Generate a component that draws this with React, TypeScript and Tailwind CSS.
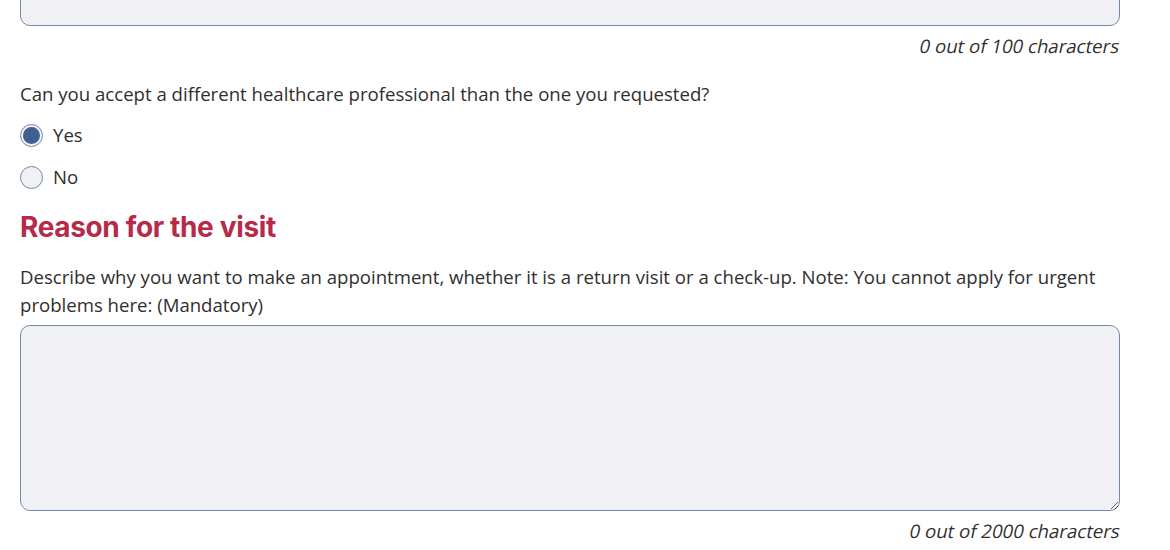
import React, { useState } from 'react'

const Radio: React.FC<{ label: string; checked: boolean; onSelect: () => void }> = ({ label, checked, onSelect }) => (
  <label className="flex items-center gap-[10px] h-6 cursor-pointer" onClick={onSelect}>
    <span className="w-[23px] h-[23px] rounded-full border-[1.5px] border-[#6f87ae] bg-[#f0f0f5] flex items-center justify-center">
      {checked && <span className="w-[17px] h-[17px] rounded-full bg-[#3f5e91]" />}
    </span>
    <span>{label}</span>
  </label>
)

export default function App() {
  const [accept, setAccept] = useState('yes')
  const [reason, setReason] = useState('')

  return (
    <div className="min-h-screen bg-white text-[#2f2f2f] text-[18.6px] leading-6 font-['Open_Sans',sans-serif] overflow-hidden">
      <div className="w-[1100px] ml-5">
        {/* previous field, scrolled off the top */}
        <textarea
          className="block w-full h-[60px] -mt-[34px] rounded-[10px] border-[1.5px] border-[#7189ae] bg-[#f0f0f5] resize-none outline-none"
          maxLength={100}
        />
        <div className="mt-2 text-right">
          <span className="inline-block -skew-x-12">0 out of 100 characters</span>
        </div>

        <p className="mt-6">Can you accept a different healthcare professional than the one you requested?</p>
        <div className="mt-[17px] flex flex-col gap-[18px]">
          <Radio label="Yes" checked={accept === 'yes'} onSelect={() => setAccept('yes')} />
          <Radio label="No" checked={accept === 'no'} onSelect={() => setAccept('no')} />
        </div>

        <h2 className="mt-[22px] text-[28px] leading-8 font-bold text-[#b72a48] font-['Inter',sans-serif] tracking-[-0.35px]">
          Reason for the visit
        </h2>
        <p className="mt-5 leading-7">
          Describe why you want to make an appointment, whether it is a return visit or a check-up. Note: You cannot apply for urgent problems here: (Mandatory)
        </p>
        <textarea
          value={reason}
          onChange={(e) => setReason(e.target.value)}
          maxLength={2000}
          className="block mt-[6px] w-full h-[186px] rounded-[10px] border-[1.5px] border-[#7189ae] bg-[#f0f0f5] outline-none p-3"
        />
        <div className="mt-2 text-right">
          <span className="inline-block -skew-x-12">{reason.length} out of 2000 characters</span>
        </div>
      </div>
    </div>
  )
}
